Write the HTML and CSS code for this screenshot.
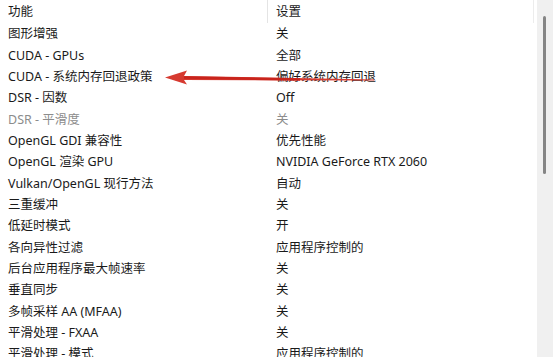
FILE: index.html
```html
<!doctype html>
<html>
<head>
	<meta charset="utf-8" />
	<title>管理 3D 设置</title>
	<link rel="stylesheet" href="styles.css">
</head>
<body>
	<div class="panel">
		<div class="grid">
			<div class="head">
				<div class="cell first">功能</div>
				<div class="cell">设置</div>
			</div>
			<div class="row"><div class="cell first">图形增强</div><div class="cell">关</div></div>
			<div class="row"><div class="cell first">CUDA - GPUs</div><div class="cell">全部</div></div>
			<div class="row"><div class="cell first">CUDA - 系统内存回退政策</div><div class="cell">偏好系统内存回退</div></div>
			<div class="row"><div class="cell first">DSR - 因数</div><div class="cell">Off</div></div>
			<div class="row off"><div class="cell first">DSR - 平滑度</div><div class="cell">关</div></div>
			<div class="row"><div class="cell first">OpenGL GDI 兼容性</div><div class="cell">优先性能</div></div>
			<div class="row"><div class="cell first">OpenGL 渲染 GPU</div><div class="cell">NVIDIA GeForce RTX 2060</div></div>
			<div class="row"><div class="cell first">Vulkan/OpenGL 现行方法</div><div class="cell">自动</div></div>
			<div class="row"><div class="cell first">三重缓冲</div><div class="cell">关</div></div>
			<div class="row"><div class="cell first">低延时模式</div><div class="cell">开</div></div>
			<div class="row"><div class="cell first">各向异性过滤</div><div class="cell">应用程序控制的</div></div>
			<div class="row"><div class="cell first">后台应用程序最大帧速率</div><div class="cell">关</div></div>
			<div class="row"><div class="cell first">垂直同步</div><div class="cell">关</div></div>
			<div class="row"><div class="cell first">多帧采样 AA (MFAA)</div><div class="cell">关</div></div>
			<div class="row"><div class="cell first">平滑处理 - FXAA</div><div class="cell">关</div></div>
			<div class="row"><div class="cell first">平滑处理 - 模式</div><div class="cell">应用程序控制的</div></div>
		</div>
		<div class="scroll">
			<div class="thumb"></div>
		</div>

		<!-- 红色箭头 -->
		<svg class="arrow" width="553" height="357" viewBox="0 0 553 357">
			<polygon points="165,77.5 187,70.5 184,76 374,79.5 374,80.5 184,80 187,84.5" fill="#d63a30" />
			<line x1="184" y1="77.5" x2="300" y2="79.5" stroke="#c8241c" stroke-width="2.5" />
		</svg>
	</div>
</body>
</html>
```

FILE: styles.css
```css
body {
	margin: 0;
	padding: 0;
	background: #fff;
}

.panel {
	width: 553px;
	height: 357px;
	display: flex;
	overflow: hidden;
	position: relative;
	font-family: "Noto Sans", "Noto Sans CJK SC", sans-serif;
	font-size: 12.5px;
	color: #1a1a1a;
}

.grid {
	width: 537px;
	flex: none;
}

.head,
.row {
	display: flex;
}

.head {
	height: 23.33px;
	line-height: 23.33px;
	border-right: 1px solid #ececec;
	width: 533px;
}

.head .first {
	border-right: 1px solid #e4e4e4;
	width: 259px;
}

.row {
	height: 21.33px;
	line-height: 21.33px;
}

.cell {
	padding-left: 8px;
	white-space: nowrap;
}

.first {
	width: 260px;
}

.off {
	color: #8c8c8c;
}

.scroll {
	width: 16px;
	background: #f0f0f0;
	position: relative;
}

.thumb {
	position: absolute;
	left: 6px;
	top: 16px;
	width: 3px;
	height: 158px;
	border-radius: 2px;
	background: #858585;
}

.arrow {
	position: absolute;
	left: 0;
	top: 0;
	pointer-events: none;
}
```
